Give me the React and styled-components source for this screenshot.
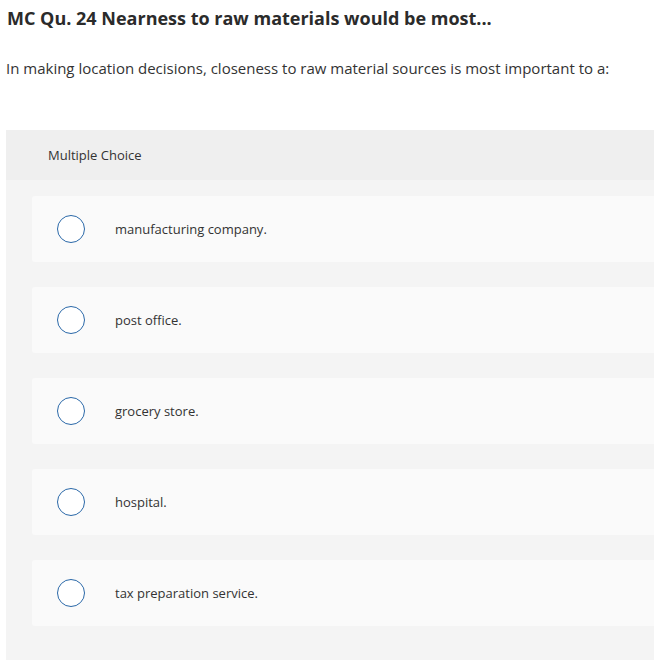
import React from "react";
import styled, { createGlobalStyle } from "styled-components";

const GlobalStyle = createGlobalStyle`
  body {
    margin: 0;
    background: #fff;
    font-family: "Open Sans", "Liberation Sans", sans-serif;
    color: #333;
  }
`;

const options = [
  "manufacturing company.",
  "post office.",
  "grocery store.",
  "hospital.",
  "tax preparation service.",
];

const App = () => {
  return (
    <Page>
      <GlobalStyle />
      <Title>MC Qu. 24 Nearness to raw materials would be most...</Title>
      <Prompt>
        In making location decisions, closeness to raw material sources is most
        important to a:
      </Prompt>
      <Panel>
        <PanelHeader>Multiple Choice</PanelHeader>
        <OptionList>
          {options.map((text) => (
            <Option key={text}>
              <Radio />
              <OptionText>{text}</OptionText>
            </Option>
          ))}
        </OptionList>
      </Panel>
    </Page>
  );
};

const Page = styled.div`
  width: 660px;
  padding: 6px 0 0 6px;
  box-sizing: border-box;
  overflow: hidden;
`;

const Title = styled.h1`
  margin: 0 0 0 1px;
  font-size: 18px;
  font-weight: 700;
  line-height: 24px;
  color: #2b2b2b;
`;

const Prompt = styled.p`
  margin: 28px 0 0 0;
  font-size: 15px;
  line-height: 20px;
  color: #333;
`;

const Panel = styled.div`
  margin-top: 52px;
  background: #f4f4f4;
  padding-bottom: 34px;
`;

const PanelHeader = styled.div`
  height: 50px;
  display: flex;
  align-items: center;
  padding-left: 42px;
  background: #efefef;
  font-size: 13px;
  color: #333;
`;

const OptionList = styled.div`
  display: flex;
  flex-direction: column;
  gap: 25px;
  padding: 16px 0 0 26px;
`;

const Option = styled.div`
  height: 66px;
  display: flex;
  align-items: center;
  background: #fafafa;
  border-radius: 3px;
  padding-left: 25px;
`;

const Radio = styled.span`
  width: 26px;
  height: 26px;
  border: 1.3px solid #2a68a8;
  border-radius: 50%;
  background: #fff;
  flex-shrink: 0;
`;

const OptionText = styled.span`
  margin-left: 30px;
  font-size: 13px;
  color: #333;
`;

export default App;
